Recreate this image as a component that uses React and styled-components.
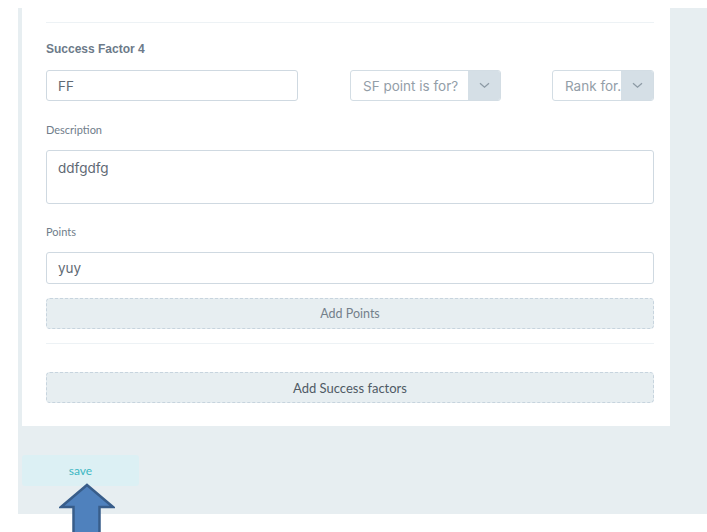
import React from "react";
import styled, { createGlobalStyle } from "styled-components";

const Global = createGlobalStyle`
  html, body { margin: 0; padding: 0; background: #ffffff; }
  body { font-family: "Lato", "Liberation Sans", sans-serif; min-height: 532px; }
  * { box-sizing: border-box; }
`;

const Shell = styled.div`
  margin: 8px 0 0 18px;
  height: 506px;
  background: #e7eef1;
  padding: 0 37px 0 4px;
  display: flex;
  flex-direction: column;
`;

const Card = styled.div`
  background: #ffffff;
  padding: 14px 16px 23px 24px;
  display: flex;
  flex-direction: column;
`;

const Divider = styled.div`
  height: 1px;
  background: #edf2f5;
  margin-top: ${(p) => p.$mt || 0}px;
`;

const Title = styled.div`
  margin-top: 18px;
  font-family: "Liberation Sans", Arial, sans-serif;
  font-weight: bold;
  font-size: 12px;
  line-height: 16px;
  color: #6c7a89;
`;

const Row = styled.div`
  margin-top: 13px;
  display: flex;
  align-items: center;
`;

const Field = styled.div`
  width: ${(p) => (p.$w ? `${p.$w}px` : "auto")};
  height: ${(p) => p.$h || 31}px;
  margin-top: ${(p) => p.$mt || 0}px;
  border: 1px solid #cfd9e1;
  border-radius: 3px;
  background: #fff;
  padding: ${(p) => (p.$area ? "9px 11px" : "0 11px")};
  display: flex;
  align-items: ${(p) => (p.$area ? "flex-start" : "center")};
  font-family: "Inter", "Open Sans", sans-serif;
  font-size: 13.5px;
  color: #5f6a74;
`;

const Select = styled.div`
  width: ${(p) => p.$w}px;
  height: 31px;
  margin-left: ${(p) => p.$ml}px;
  border: 1px solid #d3dde4;
  border-radius: 3px;
  background: #fff;
  display: flex;
  overflow: hidden;
`;

const SelectText = styled.div`
  flex: 1;
  min-width: 0;
  padding-left: 12px;
  display: flex;
  align-items: center;
  overflow: hidden;
  white-space: nowrap;
  font-family: "Inter", "Open Sans", sans-serif;
  font-size: 13.5px;
  color: #939ea8;
`;

const SelectBtn = styled.div`
  width: 32px;
  flex: none;
  background: #d5dfe6;
  display: flex;
  align-items: center;
  justify-content: center;
`;

const Label = styled.div`
  margin-top: ${(p) => p.$mt}px;
  font-size: 11px;
  line-height: 14px;
  color: #6f7d8a;
`;

const DashedBtn = styled.div`
  margin-top: ${(p) => p.$mt}px;
  height: 31px;
  background: #e7eef1;
  border: 1px dashed #c7d4de;
  border-radius: 4px;
  display: flex;
  align-items: center;
  justify-content: center;
  font-size: ${(p) => (p.$dark ? 13 : 12.5)}px;
  color: ${(p) => (p.$dark ? "#4f5a65" : "#74808b")};
`;

const SaveWrap = styled.div`
  position: relative;
  margin-top: 29px;
  width: 117px;
`;

const SaveBtn = styled.div`
  height: 31px;
  background: #dcf0f4;
  border-radius: 3px;
  display: flex;
  align-items: center;
  justify-content: center;
  font-size: 12px;
  color: #3db7c3;
`;

const Arrow = styled.svg`
  position: absolute;
  left: 37px;
  top: 28px;
  z-index: 2;
  display: block;
`;

const Chevron = () => (
  <svg width="11" height="7" viewBox="0 0 11 7">
    <path d="M1 1.2 L5.5 5.2 L10 1.2" fill="none" stroke="#8d9aa5" strokeWidth="1.3" />
  </svg>
);

export default function App() {
  return (
    <>
      <Global />
      <Shell>
        <Card>
          <Divider />
          <Title>Success Factor 4</Title>
          <Row>
            <Field $w={252}>FF</Field>
            <Select $w={151} $ml={52}>
              <SelectText>SF point is for?</SelectText>
              <SelectBtn><Chevron /></SelectBtn>
            </Select>
            <Select $w={102} $ml={51}>
              <SelectText>Rank for...</SelectText>
              <SelectBtn><Chevron /></SelectBtn>
            </Select>
          </Row>
          <Label $mt={22}>Description</Label>
          <Field $area $h={54} $mt={13}>ddfgdfg</Field>
          <Label $mt={21}>Points</Label>
          <Field $h={32} $mt={13}>yuy</Field>
          <DashedBtn $mt={14}>Add Points</DashedBtn>
          <Divider $mt={14} />
          <DashedBtn $mt={28} $dark>Add Success factors</DashedBtn>
        </Card>
        <SaveWrap>
          <SaveBtn>save</SaveBtn>
          <Arrow width="56" height="54" viewBox="-1 -1 56 54">
            <path
              d="M27 1 L53 23 L39.5 23 L39.5 52 L13.5 52 L13.5 23 L1 23 Z"
              fill="#4f81bd"
              stroke="#385d8a"
              strokeWidth="2.5"
            />
          </Arrow>
        </SaveWrap>
      </Shell>
    </>
  );
}
